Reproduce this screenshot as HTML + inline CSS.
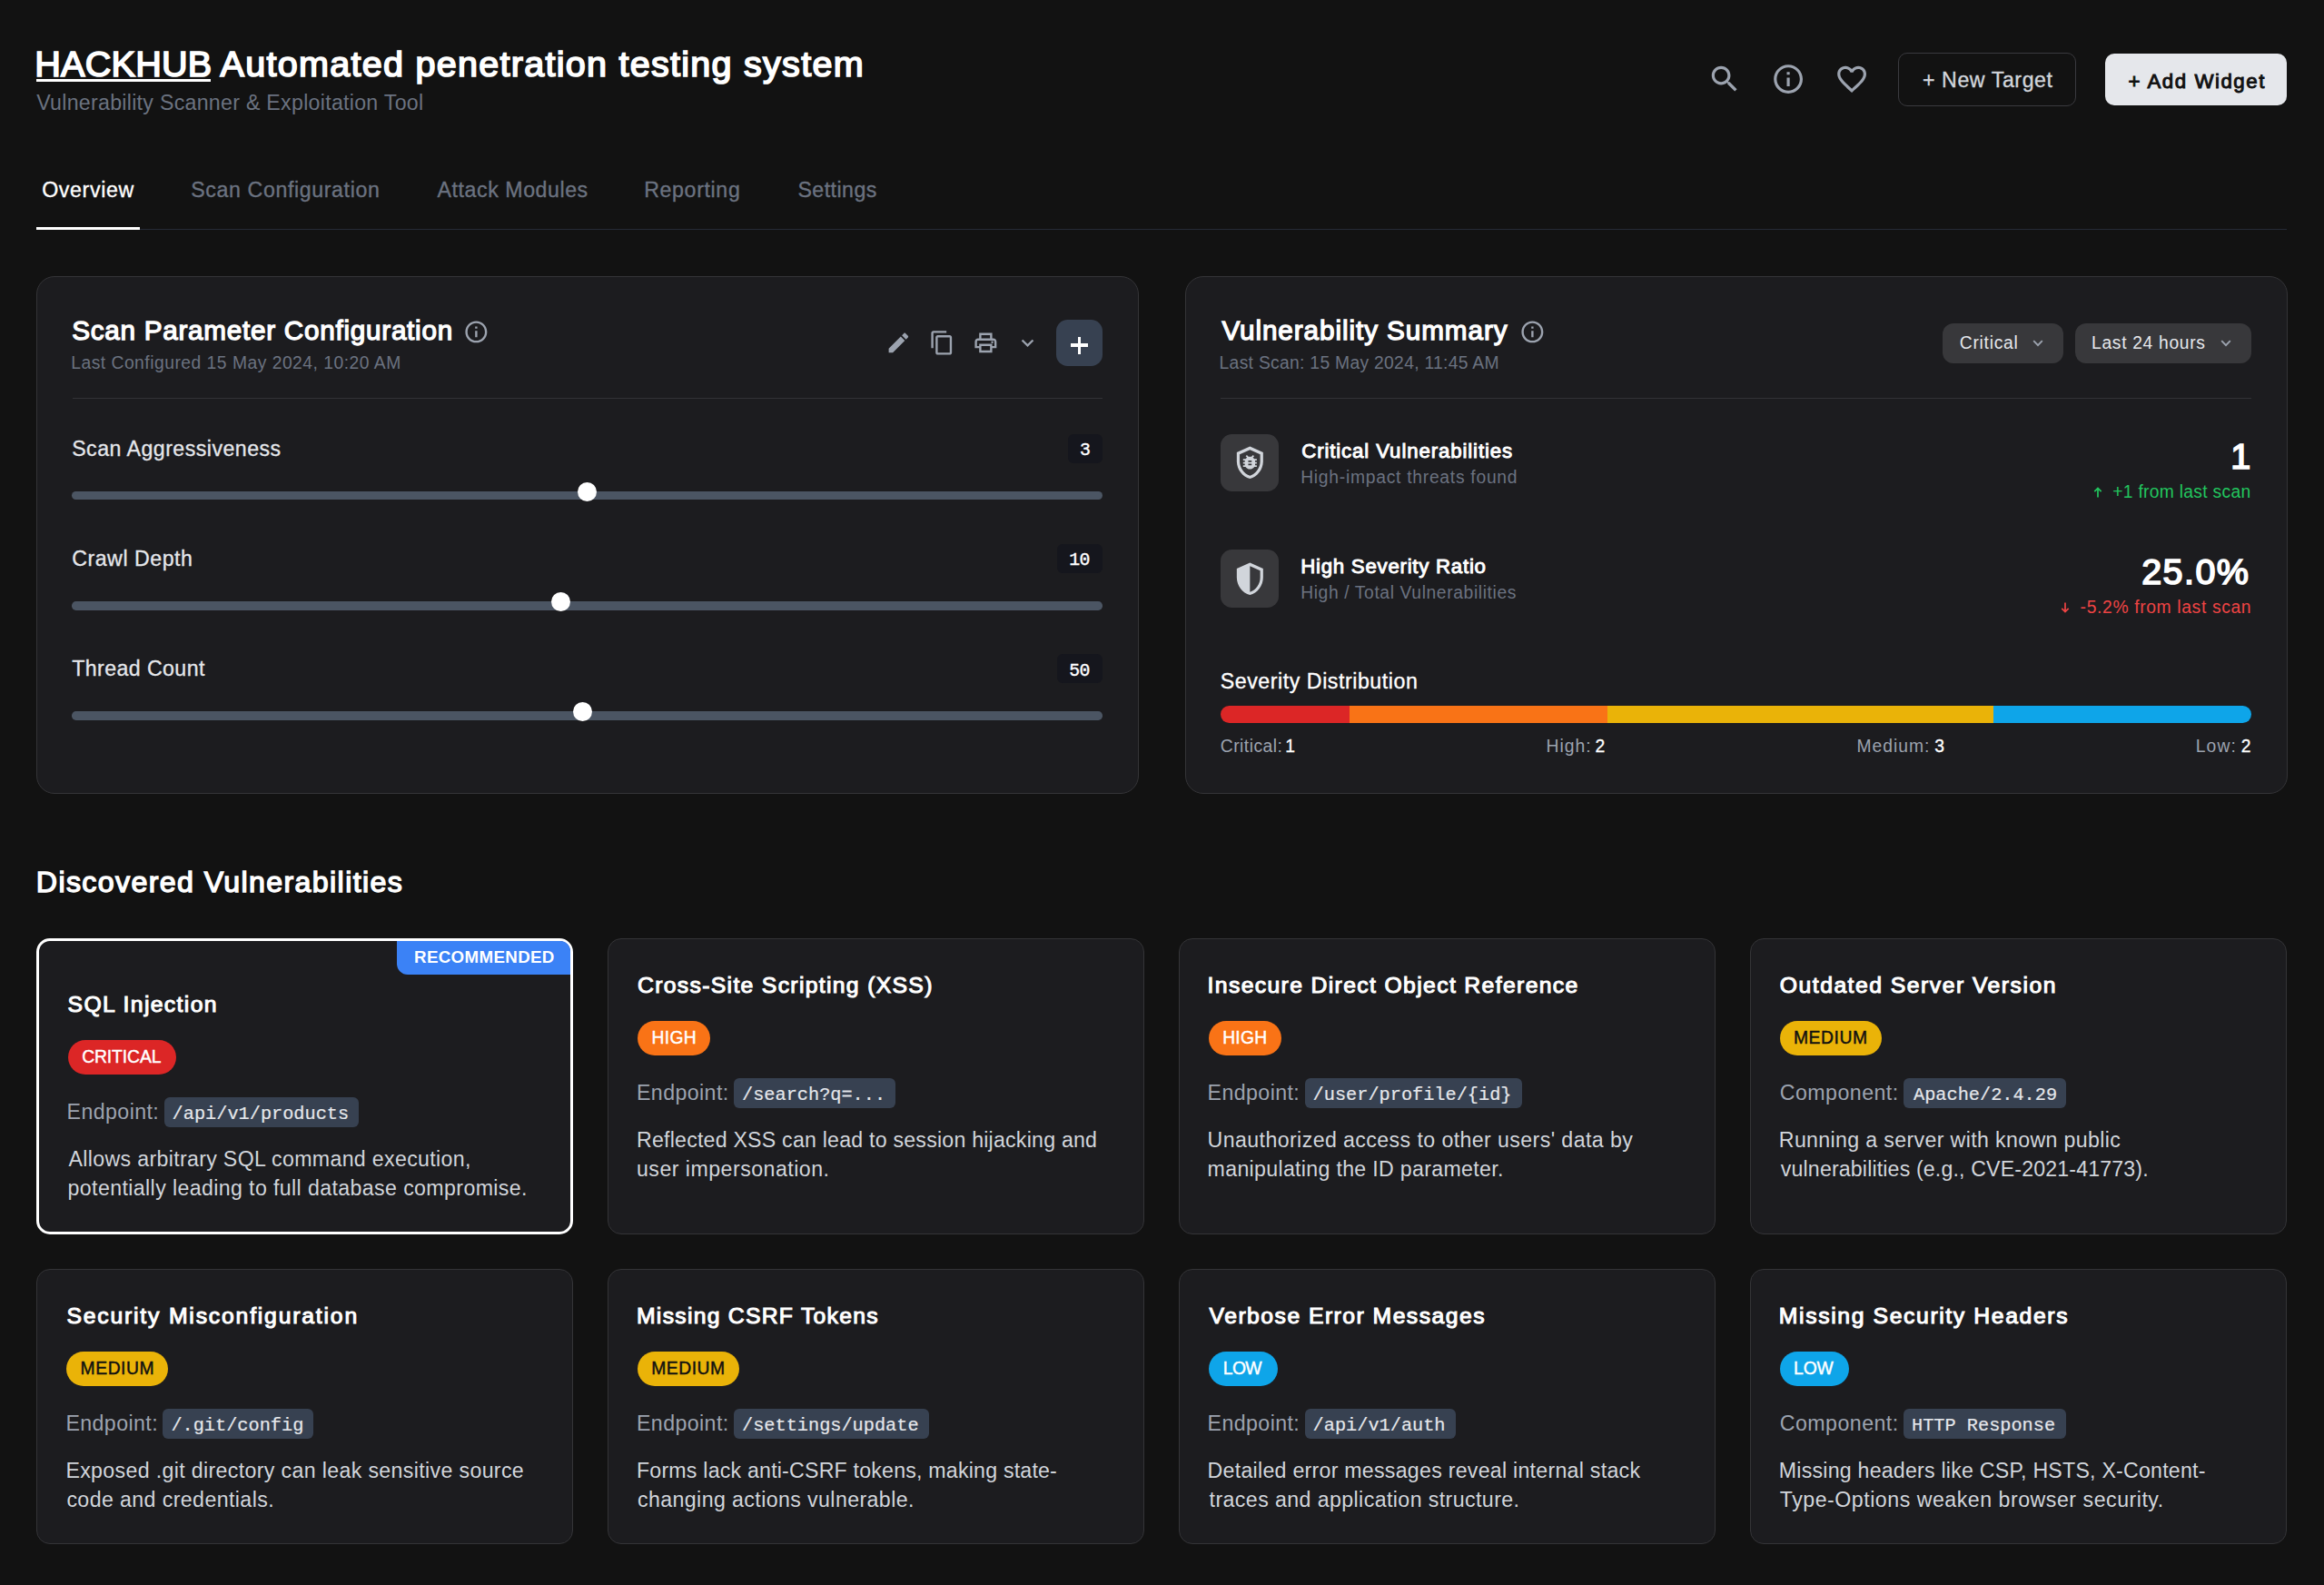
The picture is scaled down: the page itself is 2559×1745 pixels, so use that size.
<!DOCTYPE html>
<html lang="en"><head><meta charset="utf-8"><title>HACKHUB Automated penetration testing system</title>
<style>
*{box-sizing:border-box;margin:0;padding:0}
h1,h2,h3{font-weight:400}
html,body{width:2559px;height:1745px;overflow:hidden;background:#121212}
body{position:relative;font-family:"Liberation Sans",sans-serif;color:#fff;-webkit-font-smoothing:antialiased}
.t{position:absolute;white-space:nowrap;display:block}
.m{font-family:"Liberation Mono",monospace}
.ic{position:absolute;display:block}
.abs{position:absolute}
.panel{position:absolute;background:#1c1c1f;border:1px solid #343437;border-radius:20px}
.card{position:absolute;background:#1c1c1f;border:1px solid #343437;border-radius:15px}
.card.rec{border:3px solid #fff}
.hr{position:absolute;height:1px;background:#323236}
.track{position:absolute;height:9.4px;border-radius:4.7px;background:#4b5563}
.thumb{position:absolute;width:21.4px;height:21.4px;border-radius:50%;background:#fff}
.vb{position:absolute;background:#15161d;border-radius:6px}
.dd{position:absolute;background:#38383b;border-radius:12px}
.ib{position:absolute;background:#38383b;border-radius:12.5px}
.pill{position:absolute;border-radius:19px}
.chip{position:absolute;background:#374151;border-radius:6px}
.seg{position:absolute;top:0;height:100%}
</style></head><body>
<header>
<h1 class="t" style="left: 38.2px; top: 45.36px; font-size: 39.6px; line-height: 51.48px; color: rgb(255, 255, 255); -webkit-text-stroke: 1.7px rgb(255, 255, 255); letter-spacing: 0.245px;">HACKHUB</h1>
<div class="abs" style="left:40px;top:87.1px;width:192px;height:3px;background:#fff"></div>
<span class="t" style="left: 242.6px; top: 45.36px; font-size: 39.6px; line-height: 51.48px; color: rgb(255, 255, 255); -webkit-text-stroke: 1.7px rgb(255, 255, 255); letter-spacing: 1.246px;">Automated penetration testing system</span>
<p class="t" style="left: 40.2px; top: 97.84px; font-size: 23.18px; line-height: 30.13px; color: rgb(107, 114, 128); letter-spacing: 0.281px;">Vulnerability Scanner &amp; Exploitation Tool</p>
<svg class="ic" style="left:1880.10px;top:68.00px;" width="38.2" height="38.2" viewBox="0 0 24 24" fill="#9ca3af"><path d="M15.5 14h-.79l-.28-.27C15.41 12.59 16 11.11 16 9.5 16 5.91 13.09 3 9.5 3S3 5.91 3 9.5 5.91 16 9.5 16c1.61 0 3.09-.59 4.23-1.57l.27.28v.79l5 4.99L20.49 19l-4.99-5zm-6 0C7.01 14 5 11.99 5 9.5S7.01 5 9.5 5 14 7.01 14 9.5 11.99 14 9.5 14z"></path></svg>
<svg class="ic" style="left:1950.25px;top:68.10px;" width="38.2" height="38.2" viewBox="0 0 24 24" fill="#9ca3af"><path d="M11 7h2v2h-2zm0 4h2v6h-2zm1-9C6.48 2 2 6.48 2 12s4.48 10 10 10 10-4.48 10-10S17.52 2 12 2zm0 18c-4.41 0-8-3.59-8-8s3.59-8 8-8 8 3.59 8 8-3.59 8-8 8z"></path></svg>
<svg class="ic" style="left:2019.80px;top:68.25px;" width="38.2" height="38.2" viewBox="0 0 24 24" fill="#9ca3af"><path d="M16.5 3c-1.74 0-3.41.81-4.5 2.09C10.91 3.81 9.24 3 7.5 3 4.42 3 2 5.42 2 8.5c0 3.78 3.4 6.86 8.55 11.54L12 21.35l1.45-1.32C18.6 15.36 22 12.28 22 8.5 22 5.42 19.58 3 16.5 3zm-4.4 15.55l-.1.1-.1-.1C7.14 14.24 4 11.39 4 8.5 4 6.5 5.5 5 7.5 5c1.54 0 3.04.99 3.57 2.36h1.87C13.46 5.99 14.96 5 16.5 5c2 0 3.5 1.5 3.5 3.5 0 2.89-3.14 5.74-7.9 10.05z"></path></svg>
<div class="abs" style="left:2090px;top:58px;width:196px;height:58.8px;border:1px solid #3a3a3f;border-radius:10px"></div>
<span class="t" style="left: 2117px; top: 72.94px; font-size: 23.18px; line-height: 30.13px; color: rgb(209, 213, 219); -webkit-text-stroke: 0.35px rgb(209, 213, 219); letter-spacing: 0.568px;">+ New Target</span>
<div class="abs" style="left:2318px;top:59px;width:200.2px;height:57px;background:#e5e7eb;border-radius:10px"></div>
<span class="t" style="left: 2343.4px; top: 76.03px; font-size: 22.27px; line-height: 28.95px; color: rgb(17, 17, 17); -webkit-text-stroke: 0.96px rgb(17, 17, 17); letter-spacing: 1.54px;">+ Add Widget</span>
</header>
<nav>
<div class="abs" style="left:40px;top:252px;width:2478px;height:1.3px;background:#252b36"></div>
<div class="abs" style="left:40px;top:250.2px;width:114.1px;height:3px;background:#fff"></div>
<span class="t" style="left: 46.2px; top: 193.74px; font-size: 23.18px; line-height: 30.13px; color: rgb(255, 255, 255); -webkit-text-stroke: 0.35px rgb(255, 255, 255); letter-spacing: 0.631px;">Overview</span>
<span class="t" style="left: 210.2px; top: 193.74px; font-size: 23.18px; line-height: 30.13px; color: rgb(107, 114, 128); -webkit-text-stroke: 0.35px rgb(107, 114, 128); letter-spacing: 0.619px;">Scan Configuration</span>
<span class="t" style="left: 481.6px; top: 193.74px; font-size: 23.18px; line-height: 30.13px; color: rgb(107, 114, 128); -webkit-text-stroke: 0.35px rgb(107, 114, 128); letter-spacing: 0.551px;">Attack Modules</span>
<span class="t" style="left: 709.2px; top: 193.74px; font-size: 23.18px; line-height: 30.13px; color: rgb(107, 114, 128); -webkit-text-stroke: 0.35px rgb(107, 114, 128); letter-spacing: 0.639px;">Reporting</span>
<span class="t" style="left: 878.4px; top: 193.74px; font-size: 23.18px; line-height: 30.13px; color: rgb(107, 114, 128); -webkit-text-stroke: 0.35px rgb(107, 114, 128); letter-spacing: 0.467px;">Settings</span>
</nav>
<section>
<div class="panel" style="left:40px;top:304px;width:1214px;height:570px"></div>
<h2 class="t" style="left: 79.2px; top: 345.3px; font-size: 29.7px; line-height: 38.61px; color: rgb(255, 255, 255); -webkit-text-stroke: 1.28px rgb(255, 255, 255); letter-spacing: 0.727px;">Scan Parameter Configuration</h2>
<svg class="ic" style="left:510.10px;top:351.00px;" width="28.75" height="28.75" viewBox="0 0 24 24" fill="#9ca3af"><path d="M11 7h2v2h-2zm0 4h2v6h-2zm1-9C6.48 2 2 6.48 2 12s4.48 10 10 10 10-4.48 10-10S17.52 2 12 2zm0 18c-4.41 0-8-3.59-8-8s3.59-8 8-8 8 3.59 8 8-3.59 8-8 8z"></path></svg>
<span class="t" style="left: 78.2px; top: 386.75px; font-size: 19.31px; line-height: 25.1px; color: rgb(107, 114, 128); letter-spacing: 0.489px;">Last Configured 15 May 2024, 10:20 AM</span>
<svg class="ic" style="left:974.90px;top:362.90px;" width="28.75" height="28.75" viewBox="0 0 24 24" fill="#9ca3af"><path d="M3 17.25V21h3.75L17.81 9.94l-3.75-3.75L3 17.25zM20.71 7.04c.39-.39.39-1.02 0-1.41l-2.34-2.34c-.39-.39-1.02-.39-1.41 0l-1.83 1.83 3.75 3.75 1.83-1.83z"></path></svg>
<svg class="ic" style="left:1023.00px;top:362.65px;" width="28.75" height="28.75" viewBox="0 0 24 24" fill="#9ca3af"><path d="M16 1H4c-1.1 0-2 .9-2 2v14h2V3h12V1zm3 4H8c-1.1 0-2 .9-2 2v14c0 1.1.9 2 2 2h11c1.1 0 2-.9 2-2V7c0-1.1-.9-2-2-2zm0 16H8V7h11v14z"></path></svg>
<svg class="ic" style="left:1071.00px;top:362.90px;" width="28.75" height="28.75" viewBox="0 0 24 24" fill="#9ca3af"><path d="M19 8h-1V3H6v5H5c-1.66 0-3 1.34-3 3v6h4v4h12v-4h4v-6c0-1.66-1.34-3-3-3zM8 5h8v3H8V5zm8 12v2H8v-4h8v2zm2-2v-2H6v2H4v-4c0-.55.45-1 1-1h14c.55 0 1 .45 1 1v4h-2z"></path><circle cx="18" cy="11.5" r="1"></circle></svg>
<svg class="ic" style="left:1118.00px;top:364.20px;" width="27" height="27" viewBox="0 0 24 24" fill="#9ca3af"><path d="M16.59 8.59L12 13.17 7.41 8.59 6 10l6 6 6-6z"></path></svg>
<div class="abs" style="left:1163px;top:352px;width:51px;height:51px;border-radius:12.5px;background:#374151"></div>
<div class="abs" style="left:1179.2px;top:378.4px;width:18.6px;height:3.8px;background:#fff"></div>
<div class="abs" style="left:1186.6px;top:371px;width:3.8px;height:18.6px;background:#fff"></div>
<div class="hr" style="left:80px;top:438px;width:1134px"></div>
<span class="t" style="left: 79.2px; top: 478.74px; font-size: 23.18px; line-height: 30.13px; color: rgb(229, 231, 235); -webkit-text-stroke: 0.3px rgb(229, 231, 235); letter-spacing: 0.469px;">Scan Aggressiveness</span>
<div class="vb" style="left:1176.0px;top:477.8px;width:38px;height:32.3px"></div>
<span class="t m" style="left: 1189px; top: 484.33px; font-size: 19.8px; line-height: 25.74px; color: rgb(255, 255, 255); -webkit-text-stroke: 0.4px rgb(255, 255, 255); letter-spacing: -0.59px;">3</span>
<div class="track" style="left:79.2px;top:540.9px;width:1134.8px;height:9.2px"></div>
<div class="thumb" style="left:635.7px;top:530.6px"></div>
<span class="t" style="left: 79.2px; top: 599.9px; font-size: 23.18px; line-height: 30.13px; color: rgb(229, 231, 235); -webkit-text-stroke: 0.3px rgb(229, 231, 235); letter-spacing: 0.53px;">Crawl Depth</span>
<div class="vb" style="left:1164.3px;top:599.0px;width:49.7px;height:32.3px"></div>
<span class="t m" style="left: 1177.2px; top: 604.5px; font-size: 19.8px; line-height: 25.74px; color: rgb(255, 255, 255); -webkit-text-stroke: 0.4px rgb(255, 255, 255); letter-spacing: -0.59px;">10</span>
<div class="track" style="left:79.2px;top:662.1px;width:1134.8px;height:9.5px"></div>
<div class="thumb" style="left:606.9px;top:651.8px"></div>
<span class="t" style="left: 79.2px; top: 721.07px; font-size: 23.18px; line-height: 30.13px; color: rgb(229, 231, 235); -webkit-text-stroke: 0.3px rgb(229, 231, 235); letter-spacing: 0.408px;">Thread Count</span>
<div class="vb" style="left:1164.3px;top:720.1px;width:49.7px;height:32.3px"></div>
<span class="t m" style="left: 1177.2px; top: 726.67px; font-size: 19.8px; line-height: 25.74px; color: rgb(255, 255, 255); -webkit-text-stroke: 0.4px rgb(255, 255, 255); letter-spacing: -0.59px;">50</span>
<div class="track" style="left:79.2px;top:783.0px;width:1134.8px;height:10.0px"></div>
<div class="thumb" style="left:630.7px;top:772.7px"></div>
</section>
<section>
<div class="panel" style="left:1305px;top:304px;width:1213.5px;height:570px"></div>
<h2 class="t" style="left: 1345.4px; top: 345.3px; font-size: 29.7px; line-height: 38.61px; color: rgb(255, 255, 255); -webkit-text-stroke: 1.28px rgb(255, 255, 255); letter-spacing: 0.916px;">Vulnerability Summary</h2>
<svg class="ic" style="left:1672.90px;top:351.00px;" width="28.75" height="28.75" viewBox="0 0 24 24" fill="#9ca3af"><path d="M11 7h2v2h-2zm0 4h2v6h-2zm1-9C6.48 2 2 6.48 2 12s4.48 10 10 10 10-4.48 10-10S17.52 2 12 2zm0 18c-4.41 0-8-3.59-8-8s3.59-8 8-8 8 3.59 8 8-3.59 8-8 8z"></path></svg>
<span class="t" style="left: 1342.6px; top: 386.75px; font-size: 19.31px; line-height: 25.1px; color: rgb(107, 114, 128); letter-spacing: 0.293px;">Last Scan: 15 May 2024, 11:45 AM</span>
<div class="dd" style="left:2139px;top:355.8px;width:133px;height:44.2px"></div>
<span class="t" style="left: 2157.8px; top: 365.35px; font-size: 19.31px; line-height: 25.1px; color: rgb(229, 231, 235); letter-spacing: 0.718px;">Critical</span>
<svg class="ic" style="left:2237.7px;top:373px" width="12" height="10" viewBox="0 0 12 10" fill="none" stroke="#9ca3af" stroke-width="1.9"><path d="M1.2 2.2L6 7.2l4.8-5"></path></svg>
<div class="dd" style="left:2285px;top:355.8px;width:194px;height:44.2px"></div>
<span class="t" style="left: 2303px; top: 365.35px; font-size: 19.31px; line-height: 25.1px; color: rgb(229, 231, 235); letter-spacing: 0.672px;">Last 24 hours</span>
<svg class="ic" style="left:2444.7px;top:373px" width="12" height="10" viewBox="0 0 12 10" fill="none" stroke="#9ca3af" stroke-width="1.9"><path d="M1.2 2.2L6 7.2l4.8-5"></path></svg>
<div class="hr" style="left:1344px;top:438px;width:1135px"></div>
<div class="ib" style="left:1344.2px;top:478.2px;width:63.6px;height:63px"></div>
<svg class="ic" style="left:1356.60px;top:489.50px;" width="38.7" height="38.7" viewBox="0 0 24 24" fill="#d1d5db"><path d="M12 1L3 5v6c0 5.55 3.84 10.74 9 12 5.16-1.26 9-6.45 9-12V5l-9-4zm7 10c0 4.52-2.98 8.69-7 9.93-4.02-1.24-7-5.41-7-9.93V6.3l7-3.11 7 3.11V11z"></path><g transform="translate(12 11.65) scale(0.585 0.53) translate(-12 -12)"><path d="M20 8h-2.81c-.45-.78-1.07-1.45-1.82-1.96L17 4.41 15.59 3l-2.17 2.17C12.96 5.06 12.49 5 12 5c-.49 0-.96.06-1.41.17L8.41 3 7 4.41l1.62 1.63C7.88 6.55 7.26 7.22 6.81 8H4v2h2.09c-.05.33-.09.66-.09 1v1H4v2h2v1c0 .34.04.67.09 1H4v2h2.81c1.04 1.79 2.97 3 5.19 3s4.15-1.21 5.19-3H20v-2h-2.09c.05-.33.09-.66.09-1v-1h2v-2h-2v-1c0-.34-.04-.67-.09-1H20V8zm-6 8h-4v-2h4v2zm0-4h-4v-2h4v2z"></path></g></svg>
<span class="t" style="left: 1433.2px; top: 483.22px; font-size: 22.27px; line-height: 28.95px; color: rgb(255, 255, 255); -webkit-text-stroke: 0.96px rgb(255, 255, 255); letter-spacing: 0.869px;">Critical Vulnerabilities</span>
<span class="t" style="left: 1432.2px; top: 512.55px; font-size: 19.31px; line-height: 25.1px; color: rgb(107, 114, 128); letter-spacing: 0.725px;">High-impact threats found</span>
<span class="t" style="left: 2456.2px; top: 476.66px; font-size: 39.6px; line-height: 51.48px; color: rgb(255, 255, 255); -webkit-text-stroke: 1.7px rgb(255, 255, 255);">1</span>
<svg class="ic" style="left:2305px;top:535.8px" width="10" height="12" viewBox="0 0 10 12" fill="none" stroke="#22c55e" stroke-width="1.7"><path d="M5 11.5V1.6M1.3 5.2L5 1.5l3.7 3.7"></path></svg>
<span class="t" style="left: 2326.2px; top: 528.55px; font-size: 19.31px; line-height: 25.1px; color: rgb(34, 197, 94); letter-spacing: 0.283px;">+1 from last scan</span>
<div class="ib" style="left:1344.2px;top:605.2px;width:63.6px;height:63.6px"></div>
<svg class="ic" style="left:1356.60px;top:617.50px;" width="38.7" height="38.7" viewBox="0 0 24 24" fill="#d1d5db"><path fill-rule="evenodd" d="M12 1L3 5v6c0 5.55 3.84 10.74 9 12 5.16-1.26 9-6.45 9-12V5l-9-4zm0 2.19l7 3.11V11c0 4.52-2.98 8.69-7 9.93V3.19z"></path></svg>
<span class="t" style="left: 1432.2px; top: 610.23px; font-size: 22.27px; line-height: 28.95px; color: rgb(255, 255, 255); -webkit-text-stroke: 0.96px rgb(255, 255, 255); letter-spacing: 0.734px;">High Severity Ratio</span>
<span class="t" style="left: 1432.2px; top: 639.55px; font-size: 19.31px; line-height: 25.1px; color: rgb(107, 114, 128); letter-spacing: 0.601px;">High / Total Vulnerabilities</span>
<span class="t" style="left: 2358.2px; top: 603.66px; font-size: 39.6px; line-height: 51.48px; color: rgb(255, 255, 255); -webkit-text-stroke: 1.7px rgb(255, 255, 255); letter-spacing: 1.391px;">25.0%</span>
<svg class="ic" style="left:2268.7px;top:662.6px" width="10" height="12" viewBox="0 0 10 12" fill="none" stroke="#ef4444" stroke-width="1.7"><path d="M5 .5v9.9M1.3 6.8L5 10.5l3.7-3.7"></path></svg>
<span class="t" style="left: 2290.6px; top: 655.55px; font-size: 19.31px; line-height: 25.1px; color: rgb(239, 68, 68); letter-spacing: 0.637px;">-5.2% from last scan</span>
<span class="t" style="left: 1343.8px; top: 734.53px; font-size: 23.18px; line-height: 30.13px; color: rgb(255, 255, 255); -webkit-text-stroke: 0.35px rgb(255, 255, 255); letter-spacing: 0.548px;">Severity Distribution</span>
<div class="abs" style="left:1344px;top:777px;width:1135px;height:19px;border-radius:9.5px;overflow:hidden"><div class="seg" style="left:0;width:141.9px;background:#dc2626"></div><div class="seg" style="left:141.9px;width:283.7px;background:#f97316"></div><div class="seg" style="left:425.6px;width:425.6px;background:#eab308"></div><div class="seg" style="left:851.2px;width:283.8px;background:#0ea5e9"></div></div>
<span class="t" style="left: 1343.8px; top: 809.05px; font-size: 19.31px; line-height: 25.1px; color: rgb(156, 163, 175); letter-spacing: 0.459px;">Critical:</span>
<span class="t" style="left: 1415.2px; top: 809.05px; font-size: 19.31px; line-height: 25.1px; color: rgb(255, 255, 255); -webkit-text-stroke: 0.3px rgb(255, 255, 255);">1</span>
<span class="t" style="left: 1702.6px; top: 809.05px; font-size: 19.31px; line-height: 25.1px; color: rgb(156, 163, 175); letter-spacing: 0.984px;">High:</span>
<span class="t" style="left: 1756.4px; top: 809.05px; font-size: 19.31px; line-height: 25.1px; color: rgb(255, 255, 255); -webkit-text-stroke: 0.3px rgb(255, 255, 255);">2</span>
<span class="t" style="left: 2044.4px; top: 809.05px; font-size: 19.31px; line-height: 25.1px; color: rgb(156, 163, 175); letter-spacing: 1px;">Medium:</span>
<span class="t" style="left: 2130.2px; top: 809.05px; font-size: 19.31px; line-height: 25.1px; color: rgb(255, 255, 255); -webkit-text-stroke: 0.3px rgb(255, 255, 255);">3</span>
<span class="t" style="left: 2417.8px; top: 809.05px; font-size: 19.31px; line-height: 25.1px; color: rgb(156, 163, 175); letter-spacing: 1.078px;">Low:</span>
<span class="t" style="left: 2467.8px; top: 809.05px; font-size: 19.31px; line-height: 25.1px; color: rgb(255, 255, 255); -webkit-text-stroke: 0.3px rgb(255, 255, 255);">2</span>
</section>
<section>
<h2 class="t" style="left: 39.8px; top: 951.19px; font-size: 32.17px; line-height: 41.82px; color: rgb(255, 255, 255); -webkit-text-stroke: 1.38px rgb(255, 255, 255); letter-spacing: 1.369px;">Discovered Vulnerabilities</h2>
<article class="card rec" style="left:40px;top:1033.2px;width:591.4px;height:326px">
<div class="abs" style="right:0;top:0;width:191.5px;height:37.3px;background:#3b82f6;border-radius:0 11px 0 12px"></div>
</article>
<span class="t" style="left: 456px; top: 1042.11px; font-size: 18.75px; line-height: 24.38px; color: rgb(255, 255, 255); font-weight: 700; letter-spacing: 0.335px;">RECOMMENDED</span>
<h3 class="t" style="left: 74.6px; top: 1090.31px; font-size: 24.75px; line-height: 32.18px; color: rgb(255, 255, 255); -webkit-text-stroke: 1.06px rgb(255, 255, 255); letter-spacing: 1.361px;">SQL Injection</h3>
<div class="pill" style="left:74.7px;top:1144.7px;width:119px;height:38.2px;background:#dc2626"></div>
<span class="t" style="left: 90.2px; top: 1150.85px; font-size: 19.31px; line-height: 25.1px; color: rgb(255, 255, 255); -webkit-text-stroke: 0.45px rgb(255, 255, 255); letter-spacing: -0.104px;">CRITICAL</span>
<span class="t" style="left: 73.6px; top: 1208.73px; font-size: 23.18px; line-height: 30.13px; color: rgb(156, 163, 175); letter-spacing: 0.41px;">Endpoint:</span>
<div class="chip" style="left:180.6px;top:1207.6px;width:214.9px;height:33.2px"></div>
<span class="t m" style="left: 189.6px; top: 1214.32px; font-size: 20.28px; line-height: 26.36px; color: rgb(229, 231, 235); letter-spacing: 0px; -webkit-text-stroke: 0.2px rgb(229, 231, 235);">/api/v1/products</span>
<p class="t" style="left: 75.6px; top: 1260.63px; font-size: 23.18px; line-height: 30.13px; color: rgb(209, 213, 219); letter-spacing: 0.321px;">Allows arbitrary SQL command execution,</p>
<p class="t" style="left: 74.6px; top: 1292.54px; font-size: 23.18px; line-height: 30.13px; color: rgb(209, 213, 219); letter-spacing: 0.378px;">potentially leading to full database compromise.</p>
<article class="card" style="left:668.9px;top:1033.2px;width:591.4px;height:326px">
</article>
<h3 class="t" style="left: 702px; top: 1068.51px; font-size: 24.75px; line-height: 32.18px; color: rgb(255, 255, 255); -webkit-text-stroke: 1.06px rgb(255, 255, 255); letter-spacing: 1.313px;">Cross-Site Scripting (XSS)</h3>
<div class="pill" style="left:701.8px;top:1123.9px;width:80.2px;height:38.2px;background:#f97316"></div>
<span class="t" style="left: 717.6px; top: 1130.05px; font-size: 19.31px; line-height: 25.1px; color: rgb(255, 255, 255); -webkit-text-stroke: 0.45px rgb(255, 255, 255); letter-spacing: 0.25px;">HIGH</span>
<span class="t" style="left: 701px; top: 1187.93px; font-size: 23.18px; line-height: 30.13px; color: rgb(156, 163, 175); letter-spacing: 0.41px;">Endpoint:</span>
<div class="chip" style="left:807.7px;top:1186.8px;width:178.4px;height:33.2px"></div>
<span class="t m" style="left: 817px; top: 1192.52px; font-size: 20.28px; line-height: 26.36px; color: rgb(229, 231, 235); letter-spacing: 0px; -webkit-text-stroke: 0.2px rgb(229, 231, 235);">/search?q=...</span>
<p class="t" style="left: 701px; top: 1239.84px; font-size: 23.18px; line-height: 30.13px; color: rgb(209, 213, 219); letter-spacing: 0.212px;">Reflected XSS can lead to session hijacking and</p>
<p class="t" style="left: 701px; top: 1271.74px; font-size: 23.18px; line-height: 30.13px; color: rgb(209, 213, 219); letter-spacing: 0.471px;">user impersonation.</p>
<article class="card" style="left:1297.8px;top:1033.2px;width:591.4px;height:326px">
</article>
<h3 class="t" style="left: 1329.6px; top: 1068.51px; font-size: 24.75px; line-height: 32.18px; color: rgb(255, 255, 255); -webkit-text-stroke: 1.06px rgb(255, 255, 255); letter-spacing: 1.35px;">Insecure Direct Object Reference</h3>
<div class="pill" style="left:1330.7px;top:1123.9px;width:80.2px;height:38.2px;background:#f97316"></div>
<span class="t" style="left: 1346.2px; top: 1130.05px; font-size: 19.31px; line-height: 25.1px; color: rgb(255, 255, 255); -webkit-text-stroke: 0.45px rgb(255, 255, 255); letter-spacing: 0.25px;">HIGH</span>
<span class="t" style="left: 1329.6px; top: 1187.93px; font-size: 23.18px; line-height: 30.13px; color: rgb(156, 163, 175); letter-spacing: 0.41px;">Endpoint:</span>
<div class="chip" style="left:1436.6px;top:1186.8px;width:239.3px;height:33.2px"></div>
<span class="t m" style="left: 1445.6px; top: 1192.52px; font-size: 20.28px; line-height: 26.36px; color: rgb(229, 231, 235); letter-spacing: 0px; -webkit-text-stroke: 0.2px rgb(229, 231, 235);">/user/profile/{id}</span>
<p class="t" style="left: 1329.6px; top: 1239.84px; font-size: 23.18px; line-height: 30.13px; color: rgb(209, 213, 219); letter-spacing: 0.4px;">Unauthorized access to other users' data by</p>
<p class="t" style="left: 1329.6px; top: 1271.74px; font-size: 23.18px; line-height: 30.13px; color: rgb(209, 213, 219); letter-spacing: 0.308px;">manipulating the ID parameter.</p>
<article class="card" style="left:1926.6px;top:1033.2px;width:591.4px;height:326px">
</article>
<h3 class="t" style="left: 1959.8px; top: 1068.51px; font-size: 24.75px; line-height: 32.18px; color: rgb(255, 255, 255); -webkit-text-stroke: 1.06px rgb(255, 255, 255); letter-spacing: 1.481px;">Outdated Server Version</h3>
<div class="pill" style="left:1959.5px;top:1123.9px;width:112px;height:38.2px;background:#eab308"></div>
<span class="t" style="left: 1975px; top: 1130.05px; font-size: 19.31px; line-height: 25.1px; color: rgb(17, 17, 17); -webkit-text-stroke: 0.45px rgb(17, 17, 17); letter-spacing: 0.547px;">MEDIUM</span>
<span class="t" style="left: 1959.8px; top: 1187.93px; font-size: 23.18px; line-height: 30.13px; color: rgb(156, 163, 175); letter-spacing: 0.462px;">Component:</span>
<div class="chip" style="left:2096.2px;top:1186.8px;width:178.4px;height:33.2px"></div>
<span class="t m" style="left: 2107px; top: 1192.52px; font-size: 20.28px; line-height: 26.36px; color: rgb(229, 231, 235); letter-spacing: 0px; -webkit-text-stroke: 0.2px rgb(229, 231, 235);">Apache/2.4.29</span>
<p class="t" style="left: 1958.8px; top: 1239.84px; font-size: 23.18px; line-height: 30.13px; color: rgb(209, 213, 219); letter-spacing: 0.348px;">Running a server with known public</p>
<p class="t" style="left: 1960.8px; top: 1271.74px; font-size: 23.18px; line-height: 30.13px; color: rgb(209, 213, 219); letter-spacing: 0.145px;">vulnerabilities (e.g., CVE-2021-41773).</p>
<article class="card" style="left:40px;top:1397.2px;width:591.4px;height:302.5px">
</article>
<h3 class="t" style="left: 73.4px; top: 1432.51px; font-size: 24.75px; line-height: 32.18px; color: rgb(255, 255, 255); -webkit-text-stroke: 1.06px rgb(255, 255, 255); letter-spacing: 1.804px;">Security Misconfiguration</h3>
<div class="pill" style="left:72.9px;top:1487.9px;width:112px;height:38.2px;background:#eab308"></div>
<span class="t" style="left: 88.6px; top: 1494.05px; font-size: 19.31px; line-height: 25.1px; color: rgb(17, 17, 17); -webkit-text-stroke: 0.45px rgb(17, 17, 17); letter-spacing: 0.547px;">MEDIUM</span>
<span class="t" style="left: 72.4px; top: 1551.93px; font-size: 23.18px; line-height: 30.13px; color: rgb(156, 163, 175); letter-spacing: 0.41px;">Endpoint:</span>
<div class="chip" style="left:178.8px;top:1550.8px;width:166.2px;height:33.2px"></div>
<span class="t m" style="left: 188.4px; top: 1556.52px; font-size: 20.28px; line-height: 26.36px; color: rgb(229, 231, 235); letter-spacing: 0px; -webkit-text-stroke: 0.2px rgb(229, 231, 235);">/.git/config</span>
<p class="t" style="left: 72.4px; top: 1603.84px; font-size: 23.18px; line-height: 30.13px; color: rgb(209, 213, 219); letter-spacing: 0.345px;">Exposed .git directory can leak sensitive source</p>
<p class="t" style="left: 73.4px; top: 1635.74px; font-size: 23.18px; line-height: 30.13px; color: rgb(209, 213, 219); letter-spacing: 0.396px;">code and credentials.</p>
<article class="card" style="left:668.9px;top:1397.2px;width:591.4px;height:302.5px">
</article>
<h3 class="t" style="left: 701px; top: 1432.51px; font-size: 24.75px; line-height: 32.18px; color: rgb(255, 255, 255); -webkit-text-stroke: 1.06px rgb(255, 255, 255); letter-spacing: 1.256px;">Missing CSRF Tokens</h3>
<div class="pill" style="left:701.8px;top:1487.9px;width:112px;height:38.2px;background:#eab308"></div>
<span class="t" style="left: 717.2px; top: 1494.05px; font-size: 19.31px; line-height: 25.1px; color: rgb(17, 17, 17); -webkit-text-stroke: 0.45px rgb(17, 17, 17); letter-spacing: 0.547px;">MEDIUM</span>
<span class="t" style="left: 701px; top: 1551.93px; font-size: 23.18px; line-height: 30.13px; color: rgb(156, 163, 175); letter-spacing: 0.41px;">Endpoint:</span>
<div class="chip" style="left:807.7px;top:1550.8px;width:214.9px;height:33.2px"></div>
<span class="t m" style="left: 817px; top: 1556.52px; font-size: 20.28px; line-height: 26.36px; color: rgb(229, 231, 235); letter-spacing: 0px; -webkit-text-stroke: 0.2px rgb(229, 231, 235);">/settings/update</span>
<p class="t" style="left: 701px; top: 1603.84px; font-size: 23.18px; line-height: 30.13px; color: rgb(209, 213, 219); letter-spacing: 0.202px;">Forms lack anti-CSRF tokens, making state-</p>
<p class="t" style="left: 702px; top: 1635.74px; font-size: 23.18px; line-height: 30.13px; color: rgb(209, 213, 219); letter-spacing: 0.396px;">changing actions vulnerable.</p>
<article class="card" style="left:1297.8px;top:1397.2px;width:591.4px;height:302.5px">
</article>
<h3 class="t" style="left: 1331.6px; top: 1432.51px; font-size: 24.75px; line-height: 32.18px; color: rgb(255, 255, 255); -webkit-text-stroke: 1.06px rgb(255, 255, 255); letter-spacing: 1.458px;">Verbose Error Messages</h3>
<div class="pill" style="left:1330.7px;top:1487.9px;width:76.2px;height:38.2px;background:#0ea5e9"></div>
<span class="t" style="left: 1346.8px; top: 1494.05px; font-size: 19.31px; line-height: 25.1px; color: rgb(255, 255, 255); -webkit-text-stroke: 0.45px rgb(255, 255, 255); letter-spacing: -0.584px;">LOW</span>
<span class="t" style="left: 1329.6px; top: 1551.93px; font-size: 23.18px; line-height: 30.13px; color: rgb(156, 163, 175); letter-spacing: 0.41px;">Endpoint:</span>
<div class="chip" style="left:1436.6px;top:1550.8px;width:166.2px;height:33.2px"></div>
<span class="t m" style="left: 1445.6px; top: 1556.52px; font-size: 20.28px; line-height: 26.36px; color: rgb(229, 231, 235); letter-spacing: 0px; -webkit-text-stroke: 0.2px rgb(229, 231, 235);">/api/v1/auth</span>
<p class="t" style="left: 1329.6px; top: 1603.84px; font-size: 23.18px; line-height: 30.13px; color: rgb(209, 213, 219); letter-spacing: 0.26px;">Detailed error messages reveal internal stack</p>
<p class="t" style="left: 1331.6px; top: 1635.74px; font-size: 23.18px; line-height: 30.13px; color: rgb(209, 213, 219); letter-spacing: 0.405px;">traces and application structure.</p>
<article class="card" style="left:1926.6px;top:1397.2px;width:591.4px;height:302.5px">
</article>
<h3 class="t" style="left: 1958.8px; top: 1432.51px; font-size: 24.75px; line-height: 32.18px; color: rgb(255, 255, 255); -webkit-text-stroke: 1.06px rgb(255, 255, 255); letter-spacing: 1.617px;">Missing Security Headers</h3>
<div class="pill" style="left:1959.5px;top:1487.9px;width:76.2px;height:38.2px;background:#0ea5e9"></div>
<span class="t" style="left: 1975px; top: 1494.05px; font-size: 19.31px; line-height: 25.1px; color: rgb(255, 255, 255); -webkit-text-stroke: 0.45px rgb(255, 255, 255); letter-spacing: -0.084px;">LOW</span>
<span class="t" style="left: 1959.8px; top: 1551.93px; font-size: 23.18px; line-height: 30.13px; color: rgb(156, 163, 175); letter-spacing: 0.462px;">Component:</span>
<div class="chip" style="left:2096.2px;top:1550.8px;width:178.4px;height:33.2px"></div>
<span class="t m" style="left: 2105px; top: 1556.52px; font-size: 20.28px; line-height: 26.36px; color: rgb(229, 231, 235); letter-spacing: 0px; -webkit-text-stroke: 0.2px rgb(229, 231, 235);">HTTP Response</span>
<p class="t" style="left: 1958.8px; top: 1603.84px; font-size: 23.18px; line-height: 30.13px; color: rgb(209, 213, 219); letter-spacing: 0.219px;">Missing headers like CSP, HSTS, X-Content-</p>
<p class="t" style="left: 1959.8px; top: 1635.74px; font-size: 23.18px; line-height: 30.13px; color: rgb(209, 213, 219); letter-spacing: 0.512px;">Type-Options weaken browser security.</p>
</section>
</body></html>
